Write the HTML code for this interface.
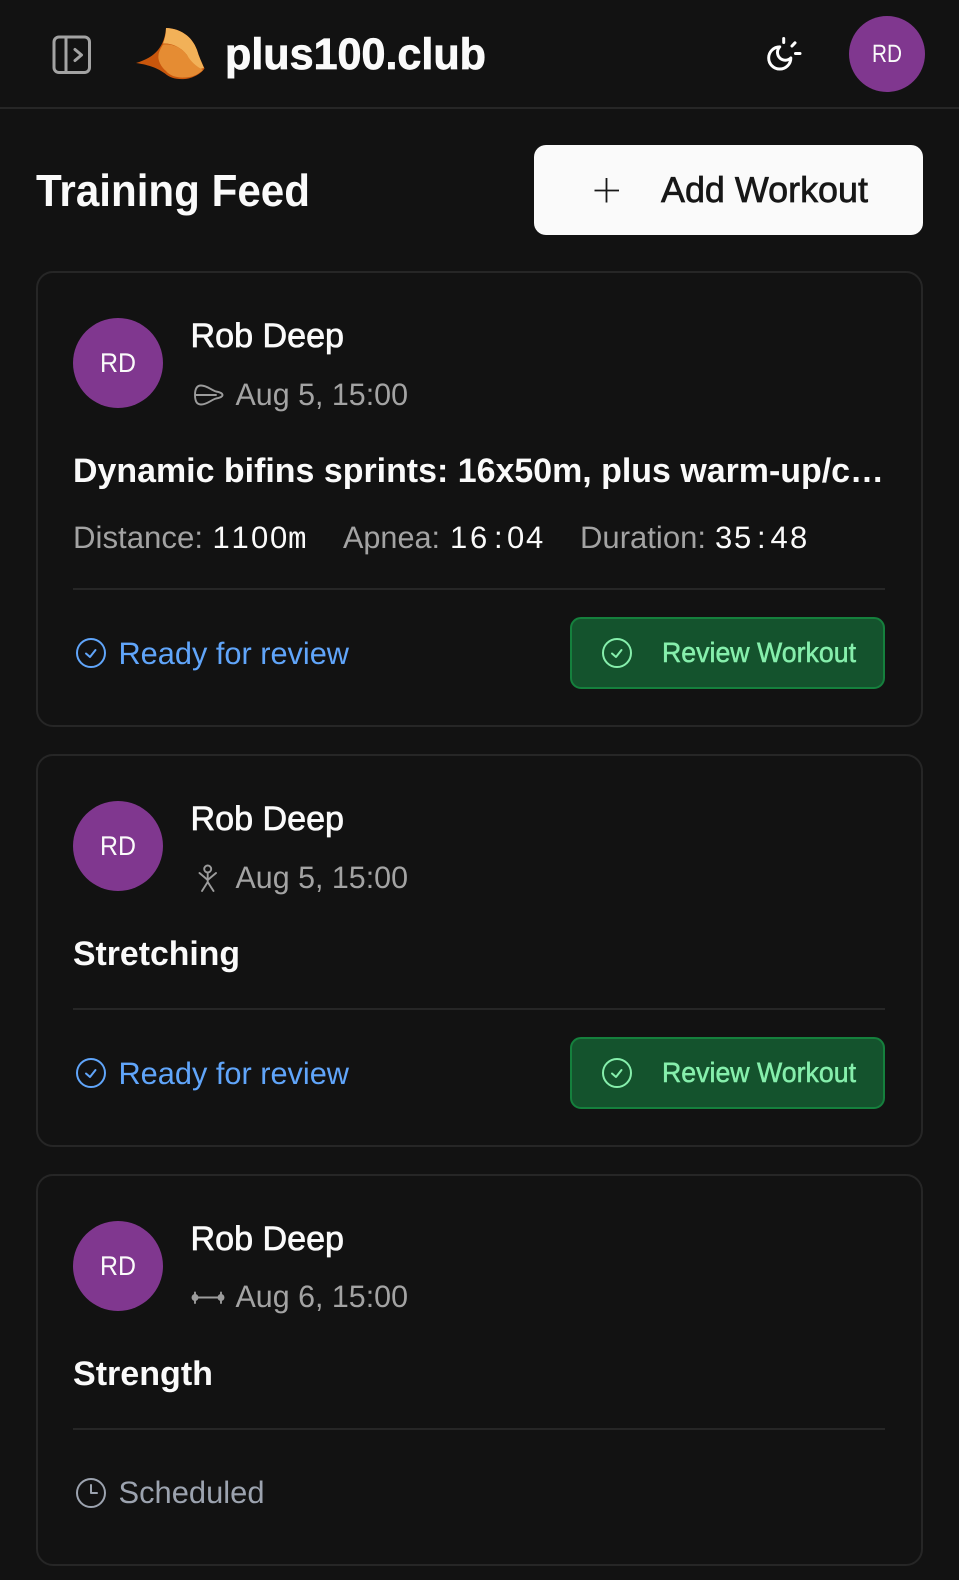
<!DOCTYPE html>
<html><head><meta charset="utf-8"><title>plus100.club</title>
<style>
html,body{margin:0;padding:0;background:#121212;width:959px;height:1580px;overflow:hidden}
svg{display:block}
text{font-family:"Liberation Sans",sans-serif;text-rendering:geometricPrecision}
.m{fill:#a3a3a3;font-size:31px}
.v{fill:#fafafa;font-size:31px}
.vm{font-family:"Liberation Mono",monospace;font-size:31px}
.n{fill:#fafafa;font-size:34px;stroke:#fafafa;stroke-width:.7}
.t{fill:#fafafa;font-size:34px;font-weight:700}
.r{fill:#60a5fa;font-size:31px}
.b{fill:#86efac;font-size:28px;stroke:#86efac;stroke-width:.5}
.a{fill:#fafafa;font-size:27px}
.i{fill:none;stroke:#9c9c9c;stroke-width:1.900;stroke-linecap:round;stroke-linejoin:round}
</style></head><body>
<svg width="959" height="1580" viewBox="0 0 959 1580" xmlns="http://www.w3.org/2000/svg">
<rect width="959" height="1580" fill="#121212"/>
<rect y="107" width="959" height="2" fill="#262626"/>

<g fill="none" stroke="#a3a3a3" stroke-width="3" stroke-linecap="round" stroke-linejoin="round">
<rect x="54" y="37" width="35.500" height="35.500" rx="5"/><path d="M66 37V72.500"/><path d="M75 49.500L81.500 55L75 60.500"/>
</g>

<path d="M136 63C146 60 153 56 158 50C163 44 165.500 36 166 28C180 28.500 192 36 197 50C199 57 202 63 204.500 68.500C201 74 192 78.500 185 79C176 79.500 170 78 165 73.500C158 68.500 150 65 136 63Z" fill="#c9560c"/>
<path d="M166 28C180 28.500 192 36 197 50C199 57 202 63 204 68L200 69C194 66 190 62 187 55C181 47 172 43 163 43.500C165 38 166 33 166 28Z" fill="#f2b158"/>
<path d="M163 44.500C172 43.500 181 47 187 55C191 62 196 66 203 70C198 75 191 77.500 185 77.500C177 78 170 76 166 71C161 67 157.500 60 158.500 55C159 51 161 48 163 44.500Z" fill="#e58c33"/>
<text x="225" y="69" font-weight="700" fill="#fafafa" stroke="#fafafa" stroke-width=".8" style="font-size:44px" textLength="261" lengthAdjust="spacingAndGlyphs">plus100.club</text>

<g fill="none" stroke="#fff" stroke-width="3" stroke-linecap="round" stroke-linejoin="round">
<path transform="translate(765 43.200) scale(1.230)" stroke-width="2.400" d="M12 3a6 6 0 0 0 9 9 9 9 0 1 1-9-9Z"/>
<path d="M783.700 38.500V42.500M792 46L795 42.800M795.500 53.500H800"/>
</g>
<circle cx="887" cy="54" r="38" fill="#80378f"/>
<text x="872" y="62" fill="#fafafa" style="font-size:25px" textLength="30" lengthAdjust="spacingAndGlyphs">RD</text>

<text x="36" y="206" font-size="45" font-weight="700" fill="#fafafa" textLength="274" lengthAdjust="spacingAndGlyphs">Training Feed</text>
<rect x="534" y="145" width="389" height="90" rx="12" fill="#fafafa"/>
<path d="M594.500 190.500H619M606.500 178V202.500" stroke="#171717" stroke-width="1.800" fill="none"/>
<text x="661" y="202" font-size="36" fill="#171717" stroke="#171717" stroke-width=".7" textLength="207" lengthAdjust="spacingAndGlyphs">Add Workout</text>

<!-- Card 1 -->
<rect x="37" y="272" width="885" height="454" rx="16" fill="none" stroke="#262626" stroke-width="2"/>
<circle cx="118" cy="363" r="45" fill="#80378f"/>
<text x="100" y="372" class="a" textLength="36" lengthAdjust="spacingAndGlyphs">RD</text>
<text x="190.500" y="347" class="n" textLength="153.500" lengthAdjust="spacingAndGlyphs">Rob Deep</text>
<path class="i" d="M201 385.500C197 385.500 195 389 195 395C195 401 197 404.500 201 404.500C207 404.500 211 400 216 398.500C220 398 222.500 396.500 222.500 395C222.500 393.500 220 392 216 391.500C211 390 207 385.500 201 385.500ZM196 395H216"/>
<text x="235.500" y="405" class="m" textLength="172.500" lengthAdjust="spacingAndGlyphs">Aug 5, 15:00</text>
<text x="73" y="482" class="t" textLength="811" lengthAdjust="spacingAndGlyphs">Dynamic bifins sprints: 16x50m, plus warm-up/c…</text>
<text x="73" y="548" class="m" textLength="130" lengthAdjust="spacingAndGlyphs">Distance:</text>
<text y="548" class="v"><tspan x="212.500 231.500 251 270">1100</tspan><tspan class="vm" x="288">m</tspan></text>
<text x="343" y="548" class="m" textLength="97" lengthAdjust="spacingAndGlyphs">Apnea:</text>
<text y="548" class="v" x="450 470 494 507 526">16:04</text>
<text x="580" y="548" class="m" textLength="126" lengthAdjust="spacingAndGlyphs">Duration:</text>
<text y="548" class="v" x="715 734 757 770.500 790">35:48</text>
<rect x="73" y="588" width="812" height="2" fill="#262626"/>
<g fill="none" stroke="#60a5fa" stroke-width="2" stroke-linecap="round" stroke-linejoin="round"><circle cx="91" cy="653" r="14"/><path d="M86 653.500L90 657L95.500 650"/></g>
<text x="118.500" y="664" class="r" textLength="230.500" lengthAdjust="spacingAndGlyphs">Ready for review</text>
<rect x="571" y="618" width="313" height="70" rx="10" fill="#14532d" stroke="#15803d" stroke-width="2"/>
<g fill="none" stroke="#86efac" stroke-width="2" stroke-linecap="round" stroke-linejoin="round"><circle cx="617" cy="653" r="14"/><path d="M612 653.500L616 657L621.500 650"/></g>
<text x="662" y="662" class="b" textLength="194" lengthAdjust="spacingAndGlyphs">Review Workout</text>

<!-- Card 2 -->
<rect x="37" y="755" width="885" height="391" rx="16" fill="none" stroke="#262626" stroke-width="2"/>
<circle cx="118" cy="846" r="45" fill="#80378f"/>
<text x="100" y="855" class="a" textLength="36" lengthAdjust="spacingAndGlyphs">RD</text>
<text x="190.500" y="830" class="n" textLength="153.500" lengthAdjust="spacingAndGlyphs">Rob Deep</text>
<g class="i"><circle cx="207.700" cy="869" r="3.500"/><path d="M207.700 872.500V882M199.500 873L207.700 880L216 873M207.700 882L202 891M207.700 882L213.500 891"/></g>
<text x="235.500" y="888" class="m" textLength="172.500" lengthAdjust="spacingAndGlyphs">Aug 5, 15:00</text>
<text x="73" y="965" class="t" textLength="167" lengthAdjust="spacingAndGlyphs">Stretching</text>
<rect x="73" y="1008" width="812" height="2" fill="#262626"/>
<g fill="none" stroke="#60a5fa" stroke-width="2" stroke-linecap="round" stroke-linejoin="round"><circle cx="91" cy="1073" r="14"/><path d="M86 1073.500L90 1077L95.500 1070"/></g>
<text x="118.500" y="1084" class="r" textLength="230.500" lengthAdjust="spacingAndGlyphs">Ready for review</text>
<rect x="571" y="1038" width="313" height="70" rx="10" fill="#14532d" stroke="#15803d" stroke-width="2"/>
<g fill="none" stroke="#86efac" stroke-width="2" stroke-linecap="round" stroke-linejoin="round"><circle cx="617" cy="1073" r="14"/><path d="M612 1073.500L616 1077L621.500 1070"/></g>
<text x="662" y="1082" class="b" textLength="194" lengthAdjust="spacingAndGlyphs">Review Workout</text>

<!-- Card 3 -->
<rect x="37" y="1175" width="885" height="390" rx="16" fill="none" stroke="#262626" stroke-width="2"/>
<circle cx="118" cy="1266" r="45" fill="#80378f"/>
<text x="100" y="1275" class="a" textLength="36" lengthAdjust="spacingAndGlyphs">RD</text>
<text x="190.500" y="1250" class="n" textLength="153.500" lengthAdjust="spacingAndGlyphs">Rob Deep</text>
<g class="i"><circle cx="195" cy="1297.500" r="2.500" fill="#9c9c9c"/><circle cx="221" cy="1297.500" r="2.500" fill="#9c9c9c"/><path d="M198 1297.500H218M195 1292.500V1303M221 1292.500V1303"/></g>
<text x="235.500" y="1307" class="m" textLength="172.500" lengthAdjust="spacingAndGlyphs">Aug 6, 15:00</text>
<text x="73" y="1385" class="t" textLength="140" lengthAdjust="spacingAndGlyphs">Strength</text>
<rect x="73" y="1428" width="812" height="2" fill="#262626"/>
<g fill="none" stroke="#9ca3af" stroke-width="2" stroke-linecap="round" stroke-linejoin="round"><circle cx="91" cy="1493" r="14"/><path d="M91 1485V1493H97"/></g>
<text x="118.500" y="1503" class="m" style="fill:#9ca3af" textLength="146" lengthAdjust="spacingAndGlyphs">Scheduled</text>
</svg>
</body></html>
